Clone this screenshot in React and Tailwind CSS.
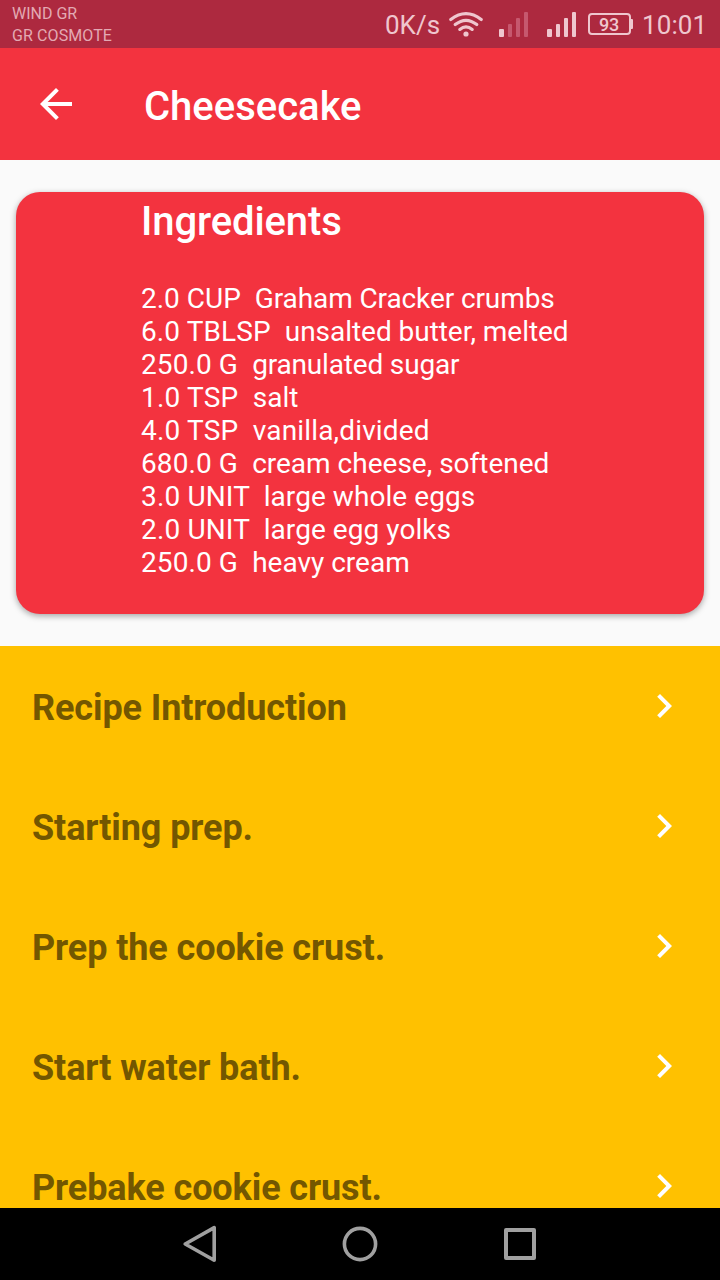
const ingredients = [
  { amount: "2.0 CUP  ", name: "Graham Cracker crumbs", amountClass: "", nameClass: "tracking-[-0.1px]" },
  { amount: "6.0 TBLSP  ", name: "unsalted butter, melted", amountClass: "tracking-[0.1px]", nameClass: "tracking-[-0.04px]" },
  { amount: "250.0 G  ", name: "granulated sugar", amountClass: "tracking-[0.1px]", nameClass: "tracking-[-0.17px]" },
  { amount: "1.0 TSP  ", name: "salt", amountClass: "tracking-[0.2px]", nameClass: "" },
  { amount: "4.0 TSP  ", name: "vanilla,divided", amountClass: "tracking-[0.2px]", nameClass: "tracking-[0.16px]" },
  { amount: "680.0 G  ", name: "cream cheese, softened", amountClass: "tracking-[0.1px]", nameClass: "" },
  { amount: "3.0 UNIT  ", name: "large whole eggs", amountClass: "tracking-[0.15px]", nameClass: "tracking-[0.06px]" },
  { amount: "2.0 UNIT  ", name: "large egg yolks", amountClass: "tracking-[0.15px]", nameClass: "tracking-[0.06px]" },
  { amount: "250.0 G  ", name: "heavy cream", amountClass: "tracking-[0.1px]", nameClass: "" },
];

const steps = [
  "Recipe Introduction",
  "Starting prep.",
  "Prep the cookie crust.",
  "Start water bath.",
  "Prebake cookie crust.",
];

function Wifi() {
  return (
    <svg className="ml-[9px] h-12 w-[34px] shrink-0" viewBox="449 0 34 48" fill="none" stroke="#efc6ce" strokeWidth="3.2" strokeLinecap="round">
      <path d="M450.8 19.5Q466 7.8 481.2 19.5" />
      <path d="M455.2 24.6Q466 16 476.8 24.6" />
      <path d="M459.8 29.4Q466 24.4 472.2 29.4" />
      <circle cx="466" cy="34" r="2.6" fill="#efc6ce" stroke="none" />
    </svg>
  );
}

function Signal({ dim, className }) {
  const rest = dim ? "#c6586e" : "#efc6ce";
  return (
    <svg className={"h-12 w-[30px] shrink-0 " + className} viewBox="0 0 30 48">
      <rect x="0" y="29" width="5" height="8" rx="1" fill="#efc6ce" />
      <rect x="9" y="24" width="4" height="13" rx="1" fill={rest} />
      <rect x="17" y="18" width="4" height="19" rx="1" fill={rest} />
      <rect x="25" y="12" width="4" height="25" rx="1" fill={rest} />
    </svg>
  );
}

function StatusBar() {
  return (
    <div className="flex h-12 shrink-0 bg-[#ad293f] text-[#efc6ce]">
      <div className="w-[385px] pl-3 pt-[3px] text-[16px] leading-[22px] text-[#e3a9b3]">
        <div>WIND GR</div>
        <div className="tracking-[0.1px]">GR COSMOTE</div>
      </div>
      <div className="flex h-12 items-center whitespace-nowrap">
        <span className="w-[55px] pt-[2px] text-[26px] leading-8">0K/s</span>
        <Wifi />
        <Signal dim className="ml-4" />
        <Signal className="ml-[18px]" />
        <div className="ml-[11px] flex items-center">
          <div className="flex h-[22px] w-[43px] items-center justify-center rounded-[4px] border-2 border-[#efc6ce] pr-px pt-px text-[18px] font-medium leading-none tracking-[-0.2px]">93</div>
          <div className="h-[10px] w-[2px] rounded-r-[1px] bg-[#efc6ce]" />
        </div>
        <span className="ml-[9px] pt-[2px] text-[26px] leading-8 tracking-[0.1px]">10:01</span>
      </div>
    </div>
  );
}

export default function App() {
  return (
    <div className="flex h-[1280px] w-[720px] flex-col overflow-hidden bg-[#fafafa] font-['Roboto',sans-serif]">
      <StatusBar />
      <header className="flex h-28 shrink-0 items-center bg-[#f3333f] pl-8 text-white">
        <svg className="size-12" viewBox="0 0 24 24" fill="currentColor">
          <path d="M20 11H7.83l5.59-5.59L12 4l-8 8 8 8 1.41-1.41L7.83 13H20v-2z" />
        </svg>
        <h1 className="ml-16 pt-[6px] text-[40px] font-medium leading-[48px]">Cheesecake</h1>
      </header>

      <section className="mx-4 my-8 h-[422px] shrink-0 rounded-[24px] bg-[#f3333f] pl-[125px] pt-[6px] text-white shadow-[0_2px_6px_rgba(0,0,0,0.35)]">
        <h2 className="text-[40px] font-medium leading-[47px] tracking-[-0.1px]">Ingredients</h2>
        <ul className="mt-[37px] whitespace-pre text-[28px] leading-[33px]">
          {ingredients.map(({ amount, name, amountClass, nameClass }) => (
            <li key={name}>
              <span className={amountClass}>{amount}</span>
              <span className={nameClass}>{name}</span>
            </li>
          ))}
        </ul>
      </section>

      <ul className="min-h-0 flex-1 overflow-hidden bg-[#ffc100]">
        {steps.map((step) => (
          <li key={step} className="flex h-[120px] items-center justify-between pl-8 pr-8">
            <span className="pt-1 text-[36px] font-bold leading-[42px] tracking-[-0.1px] text-[#735700]">{step}</span>
            <svg className="size-12 text-white" viewBox="0 0 24 24" fill="currentColor">
              <path d="M10 6L8.59 7.41 13.17 12l-4.58 4.59L10 18l6-6z" />
            </svg>
          </li>
        ))}
      </ul>

      <nav className="flex h-[72px] shrink-0 items-center justify-center gap-[112px] bg-black">
        <svg className="size-12" viewBox="0 0 48 48" fill="none" stroke="#a0a0a0" strokeWidth="3.6" strokeLinejoin="round">
          <path d="M38.2 7.6V40.2L9.2 24z" />
        </svg>
        <svg className="size-12" viewBox="0 0 48 48" fill="none" stroke="#a0a0a0" strokeWidth="3.6">
          <circle cx="24" cy="24" r="15.6" />
        </svg>
        <svg className="size-12" viewBox="0 0 48 48" fill="none" stroke="#a0a0a0" strokeWidth="4" strokeLinejoin="round">
          <rect x="10" y="10" width="28" height="28" />
        </svg>
      </nav>
    </div>
  );
}
